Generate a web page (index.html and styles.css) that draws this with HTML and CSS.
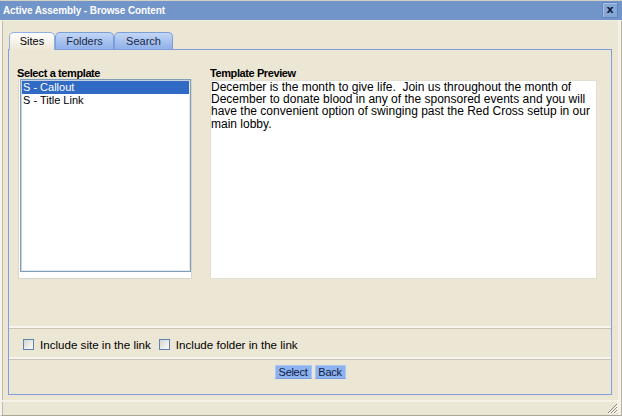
FILE: index.html
```html
<!DOCTYPE html>
<html>
<head>
<meta charset="utf-8">
<link rel="stylesheet" href="styles.css">
</head>
<body>
<div class="window">
  <div class="titlebar">
    <span class="title">Active Assembly - Browse Content</span>
    <span class="close">x</span>
  </div>
  <div class="body">
    <div class="tabs">
      <div class="tab active">Sites</div>
      <div class="tab">Folders</div>
      <div class="tab">Search</div>
    </div>
    <div class="panel">
      <div class="main">
        <div class="col left">
          <div class="label">Select a template</div>
          <div class="listwrap">
            <div class="list">
              <div class="item sel">S - Callout</div>
              <div class="item">S - Title Link</div>
            </div>
          </div>
        </div>
        <div class="col right">
          <div class="label">Template Preview</div>
          <div class="preview">December is the month to give life.&nbsp; Join us throughout the month of December to donate blood in any of the sponsored events and you will have the convenient option of swinging past the Red Cross setup in our main lobby.</div>
        </div>
      </div>
      <div class="sep"></div>
      <div class="options">
        <span class="check"></span><span class="opt">Include site in the link</span>
        <span class="check"></span><span class="opt">Include folder in the link</span>
      </div>
      <div class="sep"></div>
      <div class="buttons">
        <span class="btn btn-select">Select</span>
        <span class="btn btn-back">Back</span>
      </div>
    </div>
    <div class="footer">
      <svg class="grip" width="12" height="12" viewBox="0 0 12 12">
        <path d="M11 2 L2 11 M11 5 L5 11 M11 8 L8 11" stroke="#8f8a7c" stroke-width="1" fill="none"/>
        <path d="M12 3 L3 12 M12 6 L6 12 M12 9 L9 12" stroke="#ffffff" stroke-width="1" fill="none"/>
      </svg>
    </div>
  </div>
</div>
</body>
</html>
```
FILE: styles.css
```css
* { box-sizing: border-box; margin: 0; padding: 0; }
html, body { width: 622px; height: 416px; overflow: hidden; }
body {
  font-family: "Liberation Sans", Arial, sans-serif;
  font-size: 11px;
  color: #000;
  background: #ece6d4;
}
.window {
  width: 622px;
  height: 416px;
  display: flex;
  flex-direction: column;
  border-top: 1px solid #d6d2c6;
}
.titlebar {
  height: 20px;
  background: #7194c9;
  border-bottom: 1px solid #f1ede2;
  display: flex;
  align-items: center;
  justify-content: space-between;
  padding: 0 3px 1px 3px;
}
.title {
  color: #fff;
  font-family: "Liberation Sans Narrow", "Arial Narrow", "Liberation Sans", sans-serif;
  font-weight: bold;
  font-size: 10px;
  letter-spacing: -0.1px;
}
.close {
  width: 16px;
  height: 16px;
  background: #86a6d6;
  border: 1px solid #6485bb;
  box-shadow: inset 1px 1px 0 #a9c1e6;
  font-family: "DejaVu Sans", sans-serif;
  font-weight: bold;
  font-size: 11px;
  line-height: 13px;
  text-align: center;
  color: #10203a;
  margin-right: 1px;
}
.body {
  flex: 1;
  display: flex;
  flex-direction: column;
  padding: 11px 0 0 6px;
  border-left: 2px solid #f6f3eb;
  border-right: 1px solid #b8b3a4;
  box-shadow: inset 1px 0 0 #bdb8a9, inset -3px 0 0 #f4f1e9;
  border-bottom: 1px solid #aca899;
}
.tabs {
  display: flex;
  padding-left: 1px;
  height: 17px;
  position: relative;
  z-index: 1;
}
.tab {
  height: 17px;
  width: 59px;
  border: 1px solid #7c9ed8;
  border-bottom: none;
  border-radius: 5px 5px 0 0;
  background: linear-gradient(#c3d7f5, #8fb0ea);
  text-align: center;
  line-height: 16px;
  color: #1b2a44;
}
.tab.active {
  width: 46px;
  height: 18px;
  background: linear-gradient(#ffffff, #ece6d4);
  border-color: #8fb0e2;
  color: #000;
}
.panel {
  width: 604px;
  height: 346px;
  border: 1px solid #7f9fd9;
  display: flex;
  flex-direction: column;
}
.main {
  height: 276px;
  display: flex;
  padding: 17px 0 0 8px;
  gap: 18px;
}
.col { display: flex; flex-direction: column; }
.left { width: 175px; }
.right { width: 387px; }
.label {
  font-weight: bold;
  line-height: 12px;
  height: 12px;
  letter-spacing: -0.4px;
}
.right .label { height: 13px; }
.listwrap {
  margin-left: 1px;
  width: 174px;
  height: 200px;
  background: #fff;
  border: 1px solid #d9d5c9;
  border-top: none;
}
.list {
  margin-left: 1px;
  width: 171px;
  height: 193px;
  border: 1px solid #7f9db9;
  box-shadow: inset 1px 1px 0 #c9d3df, inset -1px -1px 0 #e6ebf1;
  padding: 1px;
}
.item {
  height: 13px;
  line-height: 13px;
  padding-left: 1px;
  color: #000;
}
.item.sel { background: #316ac5; color: #fff; }
.preview {
  width: 387px;
  height: 199px;
  background: #fff;
  border: 1px solid #e2ded3;
  font-size: 12px;
  line-height: 12.2px;
  padding: 0;
}
.sep {
  height: 3px;
  border-top: 2px solid #f8f5ee;
  border-bottom: 1px solid #c9c4b5;
}
.options {
  height: 28px;
  display: flex;
  align-items: center;
  padding: 2px 0 0 14px;
  font-size: 11.6px;
}
.check {
  width: 11px;
  height: 11px;
  border: 1px solid #5f82b3;
  background: linear-gradient(135deg, #d6d6d0, #fbfbf8);
  margin-right: 6px;
}
.opt { margin-right: 8px; }
.buttons {
  flex: 1;
  display: flex;
  justify-content: center;
  align-items: flex-start;
  padding-top: 5px;
  gap: 3px;
}
.btn {
  height: 14px;
  line-height: 13px;
  background: #8cb2ef;
  border: 1px solid #a9c6f4;
  border-bottom-color: #7aa0de;
  text-align: center;
  color: #10203f;
  letter-spacing: -0.3px;
}
.btn-select { width: 37px; }
.btn-back { width: 31px; }
.footer {
  flex: 1;
  margin-left: -6px;
  margin-top: 5px;
  border-top: 2px solid #f6f2e8;
  display: flex;
  justify-content: flex-end;
  align-items: flex-end;
  padding: 0 3px 1px 0;
}
.grip { display: block; }
```
